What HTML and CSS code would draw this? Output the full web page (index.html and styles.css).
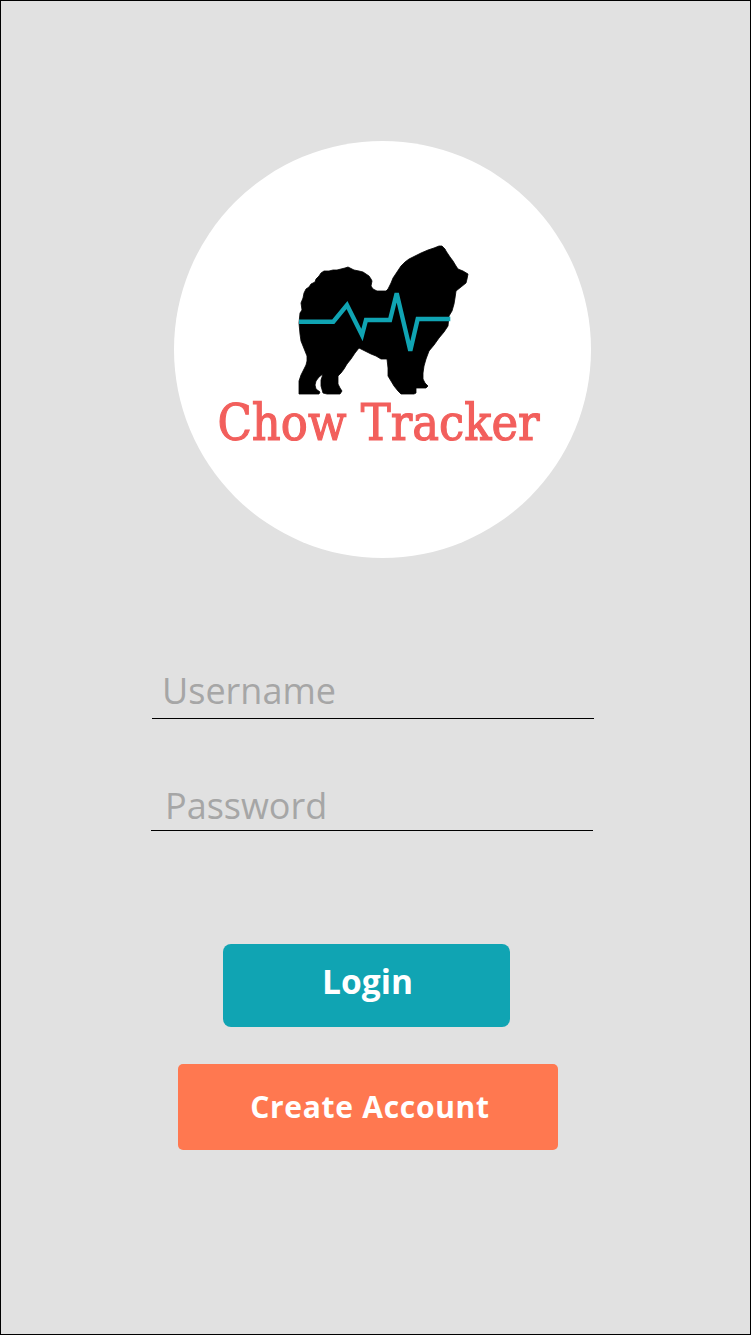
FILE: index.html
```html
<!DOCTYPE html>
<html lang="en">
<head>
<meta charset="utf-8">
<title>Chow Tracker</title>
<link rel="stylesheet" href="styles.css">
</head>
<body>
<main class="screen">
  <div class="logo">
    <svg class="dog" viewBox="280 230 200 170" aria-hidden="true">
      <path class="dog-body" d="M298 322L299 312L301 309L300 302L302 297L303 292L305 288L308 286L310 283L314 281L315 278L318 275L320 272L323 270L328 270L332 269L336 269L340 268L344 267L347 266L351 268L353 269L358 270L362 271L365 273L368 275L370 278L371 280L370 285L372 288L376 290L380 290L385 290L387 288L390 282L392 277L396 271L400 265L404 261L408 258L414 255L420 252L427 249L433 247L438 245L441 245L444 248L445 250L449 256L452 260L455 265L457 268L462 270L467 273L466 278L465 282L460 286L455 290L454 297L453 303L451 310L448 315L447 325L443 331L438 337L433 344L428 350L425 358L423 365L422 372L422 378L424 382L427 385L425 387L420 387L415 387L415 392L413 393L400 393L397 390L393 385L390 380L387 375L387 367L386 358L380 358L375 355L370 353L364 350L358 347L354 352L350 358L346 363L343 368L340 372L337 375L337 379L337 383L339 387L341 390L339 393L326 393L322 392L320 385L320 379L322 373L318 376L315 380L314 384L315 388L319 391L318 393L298 393L298 386L298 380L300 374L303 368L305 364L306 360L306 355L304 350L302 345L300 340L299 333Z"/>
      <path class="dog-pulse" d="M298 320.7L332.3 320.7L346 304L361 334L365 319L389 319L395.7 292.3L409.3 349.7L416.7 318L449.3 318"/>
    </svg>
    <div class="logo-title">Chow Tracker</div>
  </div>
  <form class="form">
    <input class="field field-user" type="text" placeholder="Username">
    <input class="field field-pass" type="password" placeholder="Password">
    <button class="btn btn-login" type="button">Login</button>
    <button class="btn btn-create" type="button">Create Account</button>
  </form>
</main>
</body>
</html>
```
FILE: styles.css
```css
* { box-sizing: border-box; }
html, body { margin: 0; padding: 0; }
body { font-family: "Open Sans", sans-serif; }
.screen {
  width: 751px;
  height: 1335px;
  background: #e1e1e1;
  border: 1px solid #000;
  padding-top: 140px;
  overflow: hidden;
}
.logo {
  width: 417px;
  height: 417px;
  margin-left: 173px;
  border-radius: 50%;
  background: #fff;
  display: flex;
  flex-direction: column;
  align-items: center;
  padding-top: 90px;
}
.dog { width: 200px; height: 170px; display: block; flex: none; margin-left: -3px; }
.dog-body { fill: #000; stroke: #000; stroke-width: 0.8; stroke-linejoin: round; }
.dog-pulse { fill: none; stroke: #10a4b3; stroke-width: 4.4; }
.logo-title {
  font-family: "DejaVu Serif", serif;
  font-stretch: condensed;
  font-size: 50px;
  line-height: 58px;
  color: #f25f5c;
  -webkit-text-stroke: 1.1px #f25f5c;
  white-space: nowrap;
  margin-top: -7px;
  margin-left: -8px;
}
.form { display: flex; flex-direction: column; align-items: flex-start; }
.field {
  display: block;
  width: 442px;
  border: 0;
  border-bottom: 1px solid #000;
  background: transparent;
  font-family: "Open Sans", sans-serif;
  font-size: 36px;
  color: #333;
  outline: 0;
  border-radius: 0;
}
.field::placeholder { color: #a6a6a6; opacity: 1; }
.field-user { margin: 105px 0 0 151px; height: 56px; padding: 0 0 0 10px; }
.field-pass { margin: 56px 0 0 150px; height: 56px; padding: 5px 0 0 14px; }
.btn {
  display: block;
  border: 0;
  padding: 0;
  color: #fff;
  font-family: "Open Sans", sans-serif;
  font-weight: 700;
}
.btn-login {
  width: 287px;
  height: 83px;
  margin: 113px 0 0 222px;
  border-radius: 8px;
  background: #10a4b3;
  font-size: 33.5px;
  padding: 0 0 9px 2px;
}
.btn-create {
  width: 380px;
  height: 86px;
  margin: 37px 0 0 177px;
  border-radius: 5px;
  background: #ff7850;
  font-size: 30px;
  letter-spacing: 0.7px;
  padding: 0 0 2px 4px;
}
```
